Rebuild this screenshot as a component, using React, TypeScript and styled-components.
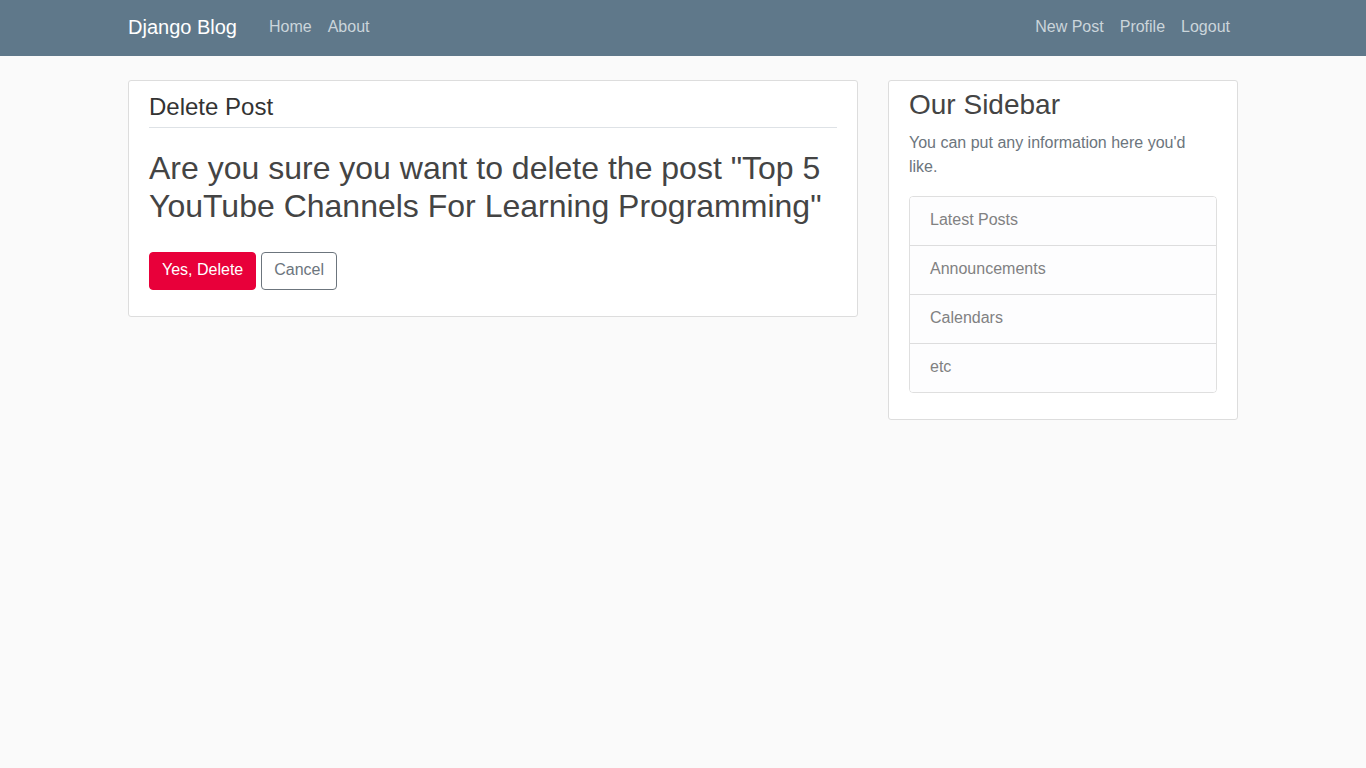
import React from "react";
import styled, { createGlobalStyle } from "styled-components";

const Global = createGlobalStyle`
  * { box-sizing: border-box; }
  html, body { margin: 0; padding: 0; }
  body {
    background: #fafafa;
    color: #333333;
    font-family: "Liberation Sans", Arial, sans-serif;
    font-size: 16px;
    line-height: 1.5;
  }
`;

const Header = styled.header`
  background: #5f788a;
  height: 56px;
`;

const NavInner = styled.nav`
  width: 1140px;
  margin: 0 auto;
  padding: 0 15px 2px;
  height: 56px;
  display: flex;
  align-items: center;
`;

const Brand = styled.a`
  color: #ffffff;
  font-size: 20px;
  line-height: 30px;
  margin-right: 24px;
  text-decoration: none;
`;

const NavGroup = styled.div<{ $right?: boolean }>`
  display: flex;
  margin-left: ${(p) => (p.$right ? "auto" : "0")};
`;

const NavLink = styled.a`
  color: #cbd5db;
  padding: 8px;
  text-decoration: none;
  line-height: 24px;
`;

const Main = styled.main`
  width: 1140px;
  margin: 24px auto 0;
  padding: 0 15px;
  display: grid;
  grid-template-columns: 730px 350px;
  column-gap: 30px;
  align-items: start;
`;

const Section = styled.div`
  background: #ffffff;
  padding: 10px 20px;
  border: 1px solid #dddddd;
  border-radius: 3px;
  margin-bottom: 20px;
`;

const Legend = styled.div`
  font-size: 24px;
  line-height: 30px;
  padding: 1px 0 5px;
  color: #333333;
  border-bottom: 1px solid #dee2e6;
  margin-bottom: 21px;
`;

const Question = styled.h2`
  font-size: 32px;
  line-height: 1.2;
  font-weight: 500;
  color: #444444;
  margin: 0 0 10px;
`;

const FieldSet = styled.div`
  display: flow-root;
  margin-bottom: 16px;
`;

const Btn = styled.button<{ $variant: "danger" | "outline" }>`
  font-family: inherit;
  font-size: 16px;
  line-height: 24px;
  padding: 5px 12px 7px;
  border-radius: 4px;
  border: 1px solid ${(p) => (p.$variant === "danger" ? "#e8003a" : "#6c757d")};
  background: ${(p) => (p.$variant === "danger" ? "#e8003a" : "transparent")};
  color: ${(p) => (p.$variant === "danger" ? "#ffffff" : "#6c757d")};
  margin-right: 5px;
  cursor: pointer;
`;

const Title = styled.h3`
  font-size: 28px;
  line-height: 26px;
  font-weight: 500;
  color: #444444;
  padding-top: 1px;
  margin: 0 0 13px;
`;

const Muted = styled.p`
  color: #6c757d;
  margin: 0 0 17px;
`;

const List = styled.ul`
  list-style: none;
  margin: 0 0 16px;
  padding: 0;
  border: 1px solid rgba(0, 0, 0, 0.125);
  border-radius: 4px;
  overflow: hidden;
`;

const Item = styled.li`
  padding: 11px 20px 13px;
  background: #fdfdfe;
  color: #818182;
  line-height: 24px;
  & + & {
    border-top: 1px solid rgba(0, 0, 0, 0.125);
  }
`;

export default function App() {
  return (
    <>
      <Global />
      <Header>
        <NavInner>
          <Brand href="#">Django Blog</Brand>
          <NavGroup>
            <NavLink href="#">Home</NavLink>
            <NavLink href="#">About</NavLink>
          </NavGroup>
          <NavGroup $right>
            <NavLink href="#">New Post</NavLink>
            <NavLink href="#">Profile</NavLink>
            <NavLink href="#">Logout</NavLink>
          </NavGroup>
        </NavInner>
      </Header>
      <Main>
        <div>
          <Section>
            <FieldSet>
              <Legend>Delete Post</Legend>
              <Question>
                Are you sure you want to delete the post "Top 5 YouTube Channels For Learning Programming"
              </Question>
            </FieldSet>
            <FieldSet>
              <Btn $variant="danger">Yes, Delete</Btn>
              <Btn $variant="outline">Cancel</Btn>
            </FieldSet>
          </Section>
        </div>
        <div>
          <Section>
            <Title>Our Sidebar</Title>
            <Muted>You can put any information here you'd like.</Muted>
            <List>
              <Item>Latest Posts</Item>
              <Item>Announcements</Item>
              <Item>Calendars</Item>
              <Item>etc</Item>
            </List>
          </Section>
        </div>
      </Main>
    </>
  );
}
